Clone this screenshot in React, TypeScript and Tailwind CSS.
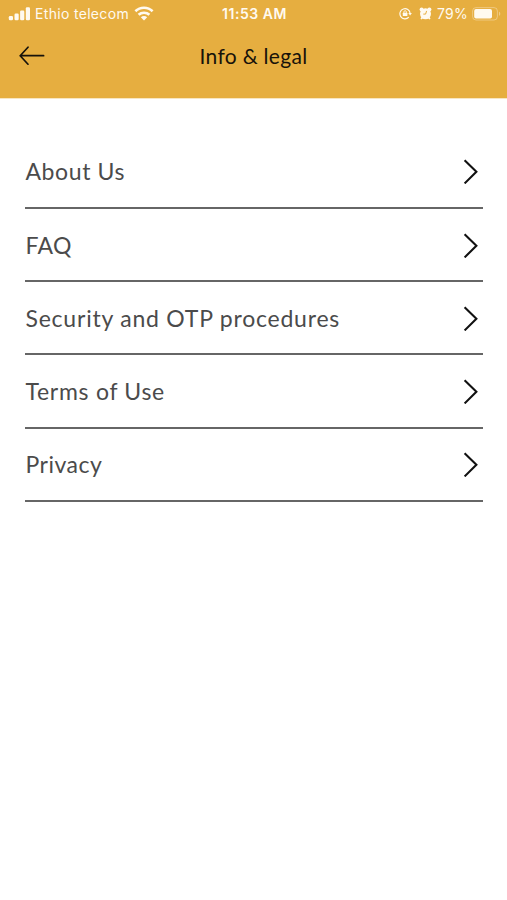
const items = [
  { label: 'About Us', tracking: 'tracking-[0.6px]' },
  { label: 'FAQ', tracking: 'tracking-[0.3px]' },
  { label: 'Security and OTP procedures', tracking: 'tracking-[0.78px]' },
  { label: 'Terms of Use', tracking: 'tracking-[0.72px]' },
  { label: 'Privacy', tracking: 'tracking-[0.5px]' },
];

function SignalIcon() {
  return (
    <svg width="23" height="14" viewBox="0 0 23 14" fill="currentColor">
      <rect x="0.8" y="9" width="4.2" height="4.2" rx="1.2" />
      <rect x="6.5" y="6.6" width="4.2" height="6.6" rx="1.2" />
      <rect x="12.1" y="3.6" width="4.2" height="9.6" rx="1.2" />
      <rect x="17.8" y="0.2" width="4.2" height="13" rx="1.2" />
    </svg>
  );
}

function WifiIcon() {
  return (
    <svg width="20" height="15" viewBox="0 0 20 15" fill="none" stroke="currentColor" strokeWidth="2.6">
      <path d="M1.4 5.2C6.2 .5 13.8 .5 18.6 5.2" />
      <path d="M4.6 8.8c3-2.8 7.8-2.8 10.8 0" />
      <path d="M10 14.4 6.8 11.2c1.8-1.5 4.6-1.5 6.4 0Z" fill="currentColor" stroke="none" />
    </svg>
  );
}

function RotationLockIcon() {
  return (
    <svg width="13" height="13" viewBox="0 0 13 13" fill="none" stroke="currentColor">
      <path d="M9.8 10.2A5.1 5.1 0 1 1 11.1 6.4" strokeWidth="1.2" />
      <path d="M9.3 6.1h3.6l-1.8 2.5Z" fill="currentColor" stroke="none" />
      <rect x="3.8" y="5.7" width="4.6" height="3.4" rx=".5" fill="currentColor" stroke="none" />
      <path d="M4.9 6V4.9a1.2 1.2 0 0 1 2.4 0V6" strokeWidth=".9" />
    </svg>
  );
}

function AlarmIcon() {
  return (
    <svg width="13" height="13" viewBox="0 0 13 13">
      <g fill="currentColor">
        <circle cx="6.5" cy="6.8" r="5.5" />
        <circle cx="2.6" cy="2.6" r="2" />
        <circle cx="10.4" cy="2.6" r="2" />
        <path d="m1.4 11.6 2-2.6 1.4 1.6-2.2 2ZM11.6 11.6l-2-2.6-1.4 1.6 2.2 2Z" />
      </g>
      <path d="M7.6 3.9 6.6 7.1H4.3" fill="none" stroke="#e6ae40" strokeWidth="1" />
    </svg>
  );
}

function BatteryIcon() {
  return (
    <svg width="29" height="14" viewBox="0 0 29 14">
      <rect x=".6" y=".6" width="24.8" height="12.4" rx="3.4" fill="none" stroke="currentColor" strokeOpacity=".35" />
      <rect x="2.2" y="2.1" width="17.8" height="9.4" rx="1.8" fill="currentColor" />
      <path d="M27 4.8c1.7.5 1.7 3.5 0 4Z" fill="currentColor" fillOpacity=".4" />
    </svg>
  );
}

export default function App() {
  return (
    <div className="flex h-[900px] w-[507px] flex-col bg-white font-['Lato',sans-serif]">
      <header className="h-[98px] bg-[#e6ae40]">
        <div className="grid h-[27px] grid-cols-[1fr_auto_1fr] items-center pl-2 pr-[6px] font-['Inter',sans-serif] text-[14px] text-[#fffaf0]">
          <div className="flex items-center">
            <SignalIcon />
            <span className="ml-[4px] mr-[5px] whitespace-nowrap tracking-[0.32px]">Ethio telecom</span>
            <WifiIcon />
          </div>
          <span className="text-[14px] font-semibold tracking-[0.55px]">11:53 AM</span>
          <div className="flex items-center justify-end">
            <RotationLockIcon />
            <span className="ml-[7px] mr-[5px]"><AlarmIcon /></span>
            <span className="mr-[4px] tracking-[0.3px]">79%</span>
            <BatteryIcon />
          </div>
        </div>
        <div className="grid h-[57px] grid-cols-[1fr_auto_1fr] items-center px-[19px] text-[#17120a]">
          <svg width="26" height="20" viewBox="0 0 26 20" fill="none" stroke="currentColor" strokeWidth="1.7" strokeLinecap="round" strokeLinejoin="round">
            <path d="M24.6 9.7H1.2M9 1.2 1.2 9.7 9 18.2" />
          </svg>
          <h1 className="text-[21px] leading-7 tracking-[0.3px]">Info &amp; legal</h1>
        </div>
      </header>
      <div className="h-px bg-[#f8e6c2]" />
      <nav className="flex flex-col pl-[25px] pr-[24.5px] pt-[36.7px]">
        {items.map(({ label, tracking }) => (
          <a key={label} className="flex h-[73.25px] items-center justify-between border-b-2 border-[#666] pr-[4px] text-[#4b4b4b]">
            <span className={`whitespace-nowrap pl-[0.5px] text-[23px] leading-7 ${tracking}`}>{label}</span>
            <svg width="16" height="26" viewBox="0 0 16 26" fill="none" stroke="#111" strokeWidth="2.1">
              <path d="m1.6 2.2 11.8 11.6L1.6 25.4" />
            </svg>
          </a>
        ))}
      </nav>
    </div>
  );
}
